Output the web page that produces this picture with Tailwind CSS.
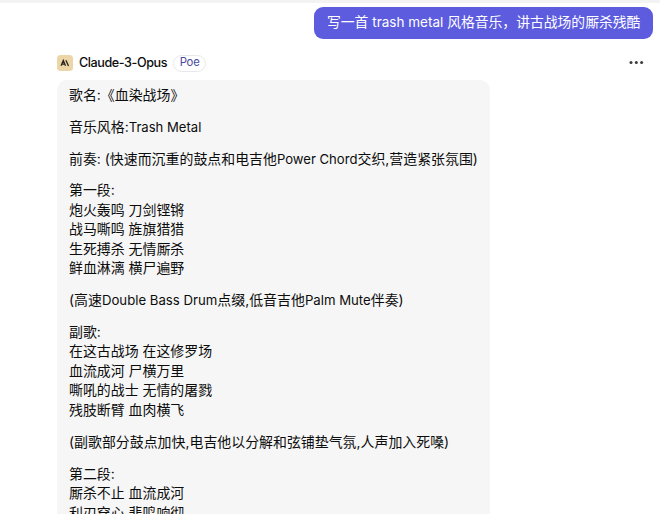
<!DOCTYPE html>
<html lang="zh-CN">
<head>
<meta charset="utf-8">
<title>Claude-3-Opus</title>
<script src="https://cdn.jsdelivr.net/npm/@tailwindcss/browser@4"></script>
</head>
<body class="h-[514px] overflow-hidden border-t-[3px] border-[#f3f3f3] bg-white font-[Inter,'Noto_Sans_CJK_SC',sans-serif] text-[13.93px] leading-[19.5px] text-[#0c0c0c]">
<main class="flex flex-col pt-1 pr-[7px] pl-[57px]">
  <div class="flex h-8 w-[339px] items-center self-end rounded-[9px] bg-[#5d5cde] pl-[13px] whitespace-nowrap text-white">
    <p class="text-[13.8px]">写一首 <span class="text-[13.5px]">trash metal</span> 风格音乐，讲古战场的厮杀残酷</p>
  </div>
  <header class="mt-4 flex h-4 items-center">
    <svg class="h-4 w-4" viewBox="0 0 16 16" fill="none">
      <rect width="16" height="16" rx="3.5" fill="#ecd6a8"/>
      <path d="M4.1 10.8 6.3 5.4 8.5 10.8M5 9.1H7.6M8.9 5.2 11.5 10.9" stroke="#29251d" stroke-width="1.3"/>
    </svg>
    <h1 class="ml-1.5 text-[12.6px] font-medium tracking-[-0.42px]">Claude-3-Opus</h1>
    <span class="ml-[6px] flex h-[17px] w-[33px] items-center justify-center rounded-full border border-[#e8e8ec] text-[11.3px] tracking-[-0.2px] text-[#4b4a9c]">Poe</span>
    <svg class="mr-[9px] ml-auto h-4 w-4" viewBox="0 0 16 16" fill="#3c3c3c"><circle cx="3" cy="7.5" r="1.5"/><circle cx="8.3" cy="7.5" r="1.5"/><circle cx="13.6" cy="7.5" r="1.5"/></svg>
  </header>
  <article class="mt-[9px] flex h-[434px] w-[433px] flex-col gap-[12.3px] rounded-t-[10px] bg-[#f6f6f6] px-3 pt-[6px] whitespace-nowrap">
    <p>歌名:《血染战场》</p>
    <p>音乐风格:<span class="text-[13.1px]">Trash Metal</span></p>
    <p>前奏: (快速而沉重的鼓点和电吉他<span class="text-[13.1px]">Power Chord</span>交织,营造紧张氛围)</p>
    <p>第一段:<br>炮火轰鸣 刀剑铿锵<br>战马嘶鸣 旌旗猎猎<br>生死搏杀 无情厮杀<br>鲜血淋漓 横尸遍野</p>
    <p>(高速<span class="text-[13.2px]">Double Bass Drum</span>点缀,低音吉他<span class="text-[13.2px]">Palm Mute</span>伴奏)</p>
    <p>副歌:<br>在这古战场 在这修罗场<br>血流成河 尸横万里<br>嘶吼的战士 无情的屠戮<br>残肢断臂 血肉横飞</p>
    <p>(副歌部分鼓点加快,电吉他以分解和弦铺垫气氛,人声加入死嗓)</p>
    <p>第二段:<br>厮杀不止 血流成河<br>利刃穿心 悲鸣响彻</p>
  </article>
</main>
</body>
</html>
